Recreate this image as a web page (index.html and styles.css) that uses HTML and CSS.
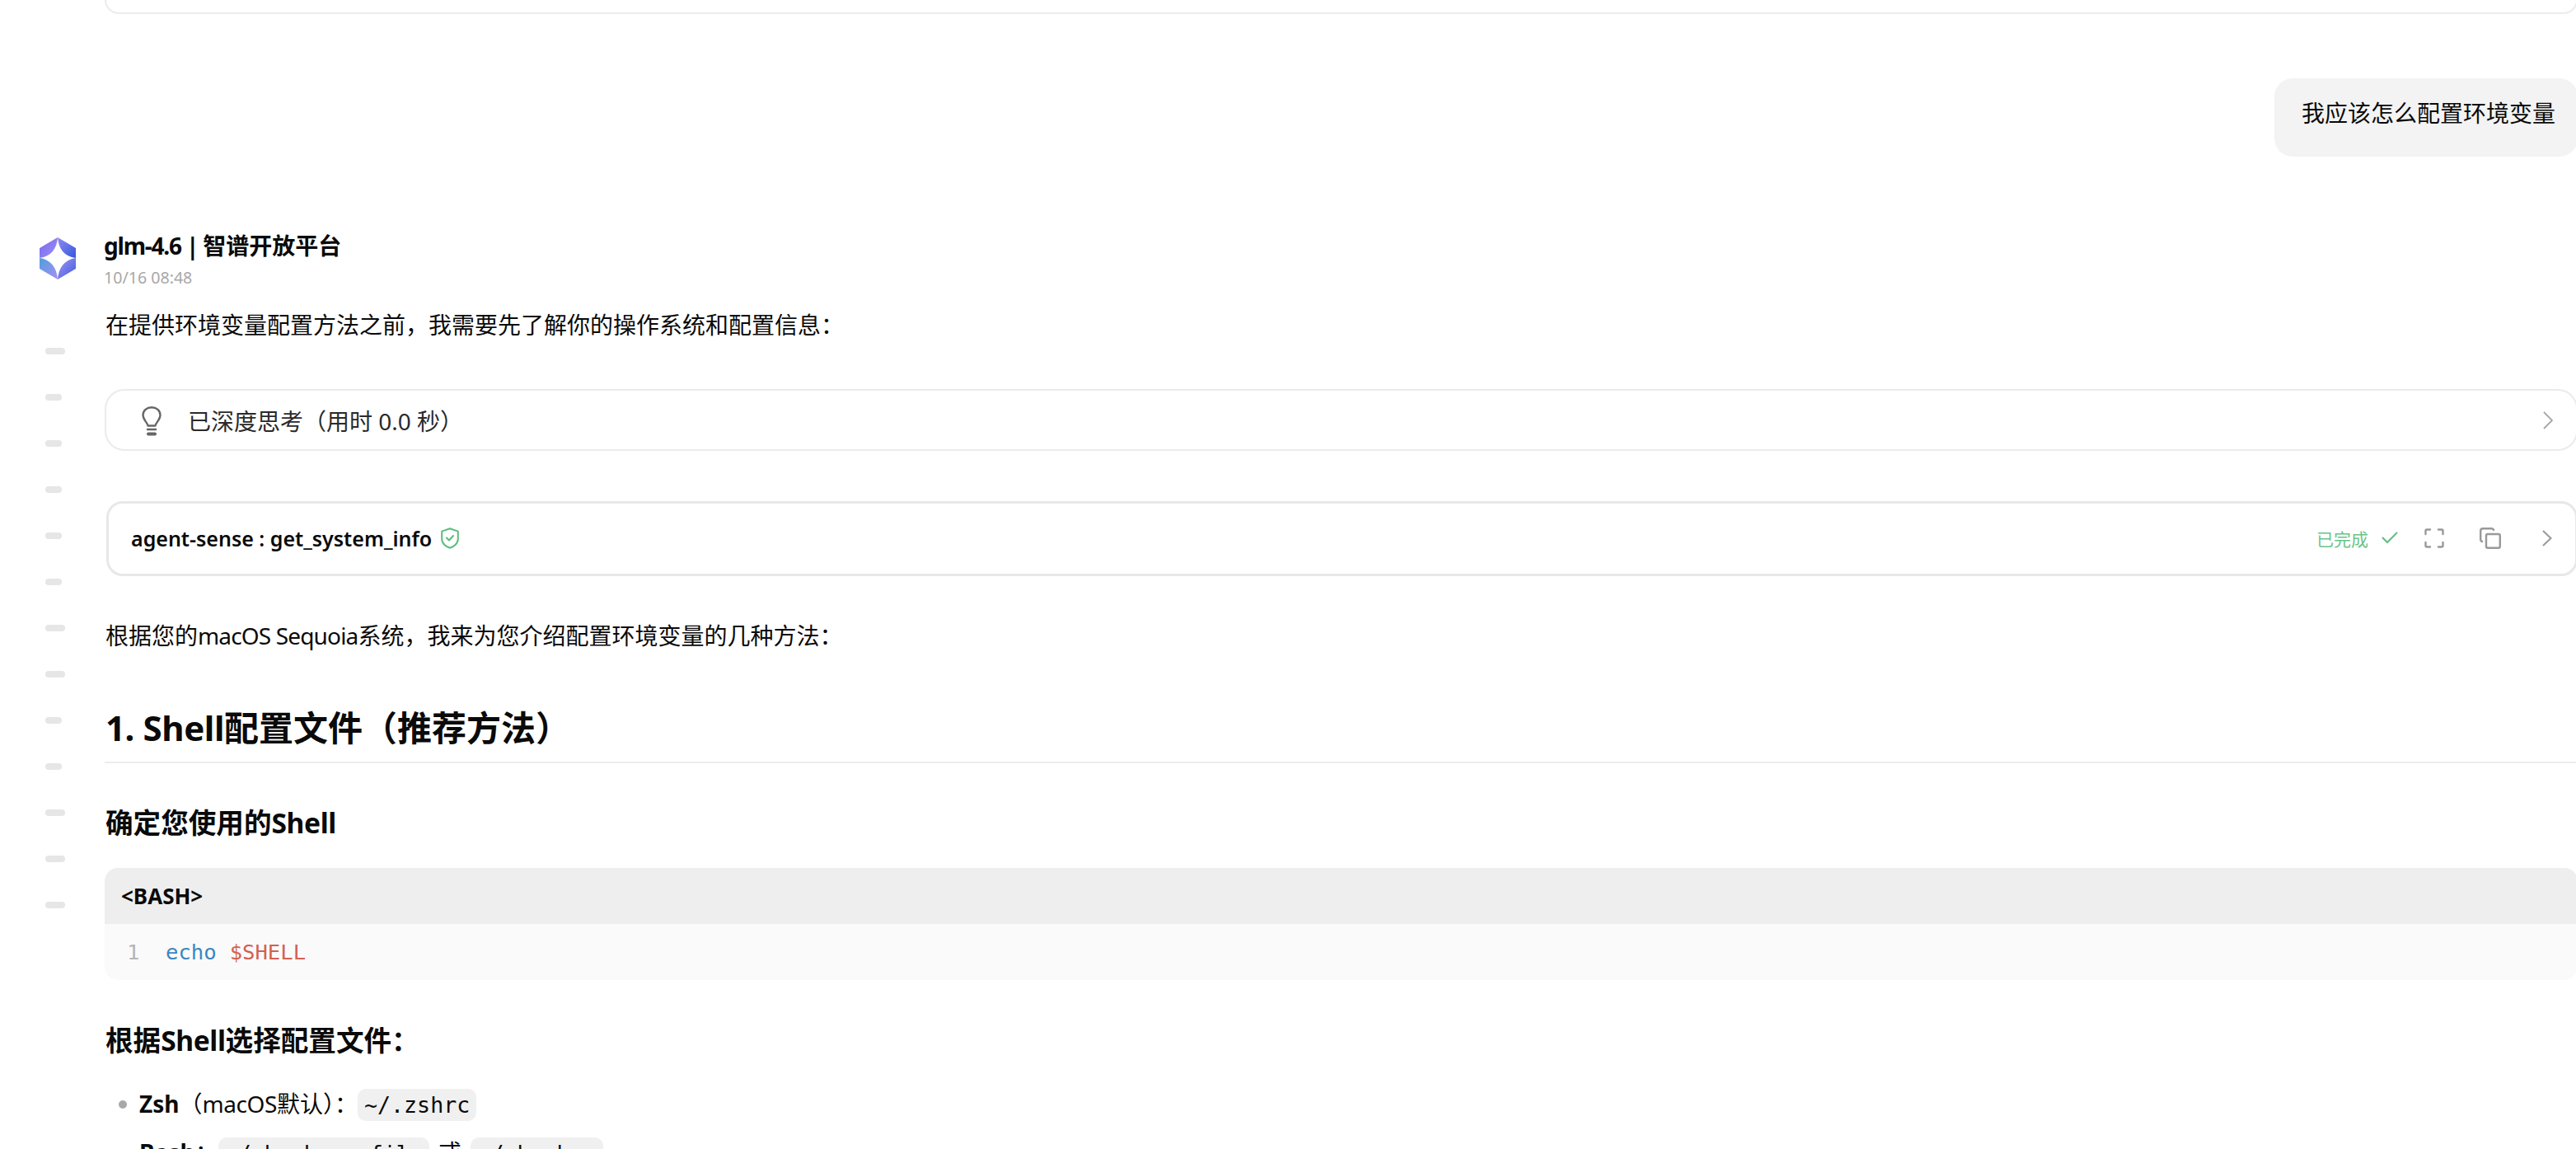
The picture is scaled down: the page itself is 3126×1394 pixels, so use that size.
FILE: index.html
```html
<!DOCTYPE html>
<html lang="zh-CN">
<head>
<meta charset="utf-8">
<title>glm-4.6 | 智谱开放平台</title>
<link rel="stylesheet" href="styles.css">
</head>
<body>
<div class="page">
  <nav class="rail">
    <span class="tick long"></span><span class="tick"></span><span class="tick"></span><span class="tick"></span><span class="tick"></span><span class="tick"></span><span class="tick long"></span><span class="tick long"></span><span class="tick"></span><span class="tick"></span><span class="tick long"></span><span class="tick long"></span><span class="tick long"></span>
  </nav>
  <div class="prev-card"></div>
  <div class="user-row"><div class="bubble">我应该怎么配置环境变量</div></div>
  <header class="head">
    <svg class="logo" viewBox="0 0 44 51" width="44" height="51">
      <defs>
        <linearGradient id="q1" x1="0" y1="0" x2="1" y2="1"><stop offset="0" stop-color="#7a62ee"/><stop offset="1" stop-color="#9a96f4"/></linearGradient>
        <linearGradient id="q2" x1="0" y1="0" x2="1" y2="1"><stop offset="0" stop-color="#8f8cf2"/><stop offset="1" stop-color="#3557dc"/></linearGradient>
        <linearGradient id="q3" x1="0" y1="0" x2="1" y2="1"><stop offset="0" stop-color="#4f9fdf"/><stop offset="1" stop-color="#a98ef2"/></linearGradient>
        <linearGradient id="q4" x1="0" y1="0" x2="1" y2="1"><stop offset="0" stop-color="#a696f4"/><stop offset="1" stop-color="#3a5bdc"/></linearGradient>
      </defs>
      <polygon points="22,0 0,13 0,25 22,25" fill="url(#q1)"/>
      <polygon points="22,0 44,13 44,25 22,25" fill="url(#q2)"/>
      <polygon points="0,25 0,38 22,51 22,25" fill="url(#q3)"/>
      <polygon points="44,25 44,38 22,51 22,25" fill="url(#q4)"/>
      <path d="M22 0C23 14 30 23 44 25C30 27 23 37 22 51C21 37 14 27 0 25C14 23 21 14 22 0Z" fill="#fff"/>
    </svg>
    <div class="head-text">
      <div class="name"><span class="tight-name">glm-4.6 | </span>智谱开放平台</div>
      <div class="time">10/16 08:48</div>
    </div>
  </header>
  <main class="content">
    <p class="para first">在提供环境变量配置方法之前，我需要先了解你的操作系统和配置信息：</p>
    <div class="think">
      <svg class="bulb" viewBox="0 0 24 36" width="24" height="36" fill="none" stroke="#666" stroke-width="2.4" stroke-linecap="round">
        <path d="M7.5 23.5C7.3 20 1.5 16.5 1.5 10.5C1.5 5 6 1.2 12 1.2S22.5 5 22.5 10.5C22.5 16.5 16.7 20 16.5 23.5Z" stroke-linejoin="round"/>
        <path d="M7 28H17" stroke-width="2.4"/>
        <path d="M8 33.5H16" stroke-width="4"/>
      </svg>
      <span class="think-label">已深度思考（用时 0.0 秒）</span>
      <svg class="chev" viewBox="0 0 12 22" width="12" height="22" fill="none" stroke="#a6a6a6" stroke-width="1.8"><path d="M1 1L11 11L1 21"/></svg>
    </div>
    <div class="tool">
      <span class="tool-name">agent-sense : get_system_info</span>
      <svg class="shield" viewBox="0 0 22 26" width="22" height="26" fill="none" stroke="#5bbd7c" stroke-width="2" stroke-linejoin="round" stroke-linecap="round">
        <path d="M11 1.2L20.8 4.6V14C20.8 19.5 15.5 23.4 11 24.8C6.5 23.4 1.2 19.5 1.2 14V4.6Z"/>
        <path d="M7 12.5L10 15.5L15 10"/>
      </svg>
      <span class="status">已完成</span>
      <svg class="check" viewBox="0 0 20 15" width="20" height="15" fill="none" stroke="#5fbd7f" stroke-width="2"><path d="M1 7L7 13L19 1"/></svg>
      <svg class="expand" viewBox="0 0 24 24" width="24" height="24" fill="none" stroke="#999" stroke-width="2.4" stroke-linecap="round" stroke-linejoin="round">
        <path d="M7 1.5H3Q1.5 1.5 1.5 3V7M17 1.5H21Q22.5 1.5 22.5 3V7M1.5 17V21Q1.5 22.5 3 22.5H7M22.5 17V21Q22.5 22.5 21 22.5H17"/>
      </svg>
      <svg class="copy" viewBox="0 0 26 26" width="26" height="26" fill="none" stroke="#999" stroke-width="2.4" stroke-linecap="round" stroke-linejoin="round">
        <path d="M3 17Q1.2 16.5 1.2 14.5V4Q1.2 1.2 4 1.2H14.5Q16.5 1.2 17 3"/>
        <rect x="8" y="8" width="16.8" height="16.8" rx="2"/>
      </svg>
      <svg class="chev2" viewBox="0 0 12 20" width="12" height="20" fill="none" stroke="#999" stroke-width="2"><path d="M1 1L10.5 10L1 19"/></svg>
    </div>
    <p class="para second">根据您的<span class="tighter">macOS Sequoia</span>系统，我来为您介绍配置环境变量的几种方法：</p>
    <h2 class="h-one"><span class="tight">1. Shell</span>配置文件（推荐方法）</h2>
    <h3 class="h-two">确定您使用的<span class="tight">Shell</span></h3>
    <div class="code">
      <div class="code-head">&lt;BASH&gt;</div>
      <div class="code-body"><span class="ln">1</span><span class="kw">echo</span><span class="var">$SHELL</span></div>
    </div>
    <h3 class="h-two after-code">根据<span class="tight">Shell</span>选择配置文件：</h3>
    <ul class="list">
      <li><b>Zsh</b>（<span class="tight">macOS</span>默认）：<code>~/.zshrc</code></li>
      <li><b>Bash</b>：<code>~/.bash_profile</code> 或 <code>~/.bashrc</code></li>
    </ul>
  </main>
</div>
</body>
</html>
```
FILE: styles.css
```css
html, body { margin: 0; padding: 0; background: #fff; }
body { font-family: "Noto Sans", "Noto Sans CJK SC", sans-serif; color: #0a0a0a; overflow: hidden; }
.page { position: relative; width: 3126px; height: 1394px; overflow: hidden; }
.tight { letter-spacing: -0.4px; }
.tighter { letter-spacing: -0.85px; }

.rail { position: absolute; left: 55px; top: 422px; display: flex; flex-direction: column; gap: 48px; align-items: flex-start; }
.tick { display: block; width: 20px; height: 8px; border-radius: 4px; background: #e6e6e6; }
.tick.long { width: 24px; }

.prev-card { box-sizing: border-box; margin-left: 127px; width: 3001px; height: 17px; border: 2px solid #ececec; border-top: 0; border-radius: 0 0 24px 24px; }

.user-row { display: flex; justify-content: flex-end; width: 3128px; margin-top: 78px; }
.bubble { box-sizing: border-box; height: 95px; padding: 0 27px 13px 33px; display: flex; align-items: center; background: #f3f3f3; border-radius: 22px; font-size: 28px; }

.head { display: flex; gap: 34px; margin: 88px 0 0 48px; }
.logo { margin-top: 10px; flex: none; }
.name { font-size: 28px; line-height: 40px; font-weight: 700; }
.tight-name { letter-spacing: -1.2px; }
.time { font-size: 19.6px; line-height: 28px; margin-top: 5px; color: #a8a8a8; }

.content { margin-left: 127px; width: 3001px; }
.para { margin: 0; font-size: 28px; line-height: 44px; padding-left: 1px; }
.para.first { margin-top: 21px; }
.para.second { margin-top: 50px; }

.think { box-sizing: border-box; height: 75px; margin-top: 56px; display: flex; align-items: center; border: 2px solid #ebebeb; border-radius: 24px; padding: 0 28px 0 43px; }
.bulb { flex: none; margin-top: 2px; }
.think-label { margin-left: 32px; font-size: 28px; color: #2a2a2a; }
.chev { margin-left: auto; }

.tool { box-sizing: border-box; height: 91px; margin: 61px 0 0 2px; display: flex; align-items: center; border: 3px solid #e8e8e8; border-radius: 20px; padding: 0 28px 2px 27px; }
.tool-name { font-size: 25px; font-weight: 600; }
.shield { margin-left: 11px; }
.status { margin-left: auto; font-size: 21px; color: #6cc38a; }
.check { margin-left: 16px; }
.expand { margin-left: 32px; }
.copy { margin-left: 43px; }
.chev2 { margin-left: 50px; }

.h-one { margin: 62px 0 0; padding: 0 0 13px 1px; font-size: 42px; line-height: 56px; font-weight: 700; border-bottom: 2px solid #ececec; }
.h-two { margin: 50px 0 0; padding-left: 1px; font-size: 33.6px; line-height: 44px; font-weight: 700; }
.h-two.after-code { margin-top: 51px; }

.code { margin-top: 33px; border-radius: 16px; overflow: hidden; }
.code-head { height: 68px; line-height: 68px; padding-left: 20px; background: #eeeeee; font-size: 26px; font-weight: 700; }
.code-body { height: 68px; line-height: 68px; padding-left: 27px; background: #fafafa; font-family: "DejaVu Sans Mono", monospace; font-size: 25.6px; white-space: pre; }
.ln { display: inline-block; width: 47px; color: #b5b5b5; }
.kw { color: #3c87c0; margin-right: 16px; }
.var { color: #d4604f; }

.list { margin: 36px 0 0; padding: 0; list-style: none; }
.list li { position: relative; height: 39px; margin-bottom: 20px; padding-left: 42px; font-size: 28px; line-height: 39px; white-space: pre; }
.list li::before { content: ""; position: absolute; left: 17px; top: 15px; width: 10px; height: 10px; border-radius: 50%; background: #a8a8a8; }
.list b { font-weight: 700; }
.list code { display: inline-block; height: 39px; line-height: 39px; padding: 0 8px; margin-right: 4px; border-radius: 10px; background: #f0f0f0; font-family: "DejaVu Sans Mono", monospace; font-size: 26.6px; }
.list code + code { margin-left: 4px; }
```
